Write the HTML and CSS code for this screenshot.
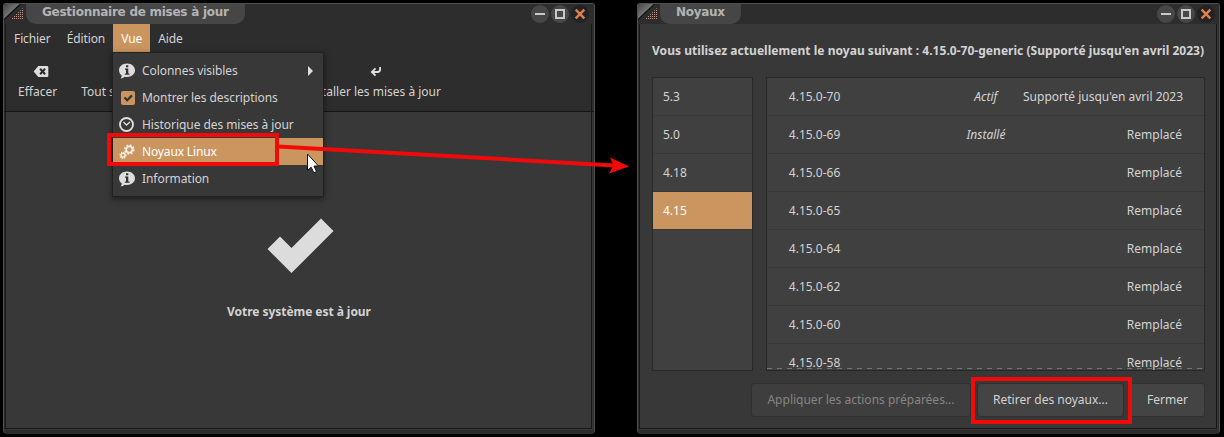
FILE: index.html
```html
<!DOCTYPE html>
<html lang="fr">
<head>
  <meta charset="UTF-8">
  <meta name="viewport" content="width=device-width, initial-scale=1.0">
  <title>Gestionnaire de mises à jour</title>
  <link rel="stylesheet" href="styles.css">
</head>
<body>
  <!-- shared symbols -->
  <svg class="defs" width="0" height="0">
    <defs>
      <pattern id="dots" width="2" height="2" patternUnits="userSpaceOnUse">
        <rect width="1" height="1" fill="#c89080"/>
      </pattern>
      <linearGradient id="shine" x1="0" y1="0" x2="1" y2="1">
        <stop offset="0" stop-color="#444"/>
        <stop offset="0.5" stop-color="#777"/>
      </linearGradient>
      <symbol id="corner" viewBox="0 0 22 20">
        <path d="M0 0h16L0 15z" fill="url(#shine)"/>
        <path d="M16.500 0L0 15.500" stroke="#111" stroke-width="1.200"/>
        <path d="M19 4v12H6z" fill="url(#dots)"/>
      </symbol>
      <symbol id="controls" viewBox="0 0 60 20">
        <circle cx="10" cy="10" r="9" fill="#474747"/>
        <path d="M5 10h10" stroke="#c8c8c8" stroke-width="2"/>
        <circle cx="30" cy="10" r="9" fill="#474747"/>
        <rect x="26" y="6" width="8" height="8" fill="none" stroke="#c8c8c8" stroke-width="2"/>
        <circle cx="50" cy="10" r="9" fill="#232325"/>
        <path d="M45.700 5.700l8.600 8.600M54.300 5.700l-8.600 8.600" stroke="#e08050" stroke-width="2.400"/>
      </symbol>
      <symbol id="info" viewBox="0 0 16 16">
        <path d="M8 .5c4.500 0 8 2.900 8 6.800S12.500 14 8 14c-.9 0-1.700-.1-2.500-.3C4.500 14.700 3.200 15.300 1.500 15.300c.9-.8 1.300-1.700 1.300-2.700C1.100 11.400 0 9.500 0 7.300 0 3.400 3.500.5 8 .5z" fill="#dedede"/>
        <path d="M7 2.300h2.300v2H7zM6 5.500h3.300v5h1.200v1.300H5.800v-1.300H7V6.800H6z" fill="#333"/>
      </symbol>
    </defs>
  </svg>

  <div class="desktop">
    <div class="window updates">
      <div class="titlebar">
        <svg class="corner"><use href="#corner"/></svg>
        <div class="title">Gestionnaire de mises à jour</div>
        <svg class="controls"><use href="#controls"/></svg>
      </div>
      <div class="menubar">
        <span>Fichier</span>
        <span>Édition</span>
        <span class="open">Vue</span>
        <span>Aide</span>
      </div>
      <div class="toolbar">
        <div class="tool clear">
          <svg width="16" height="12" viewBox="0 0 16 12">
            <path d="M5 0h9.500Q16 0 16 1.500v9Q16 12 14.500 12H5L0 6z" fill="#dedede"/>
            <path d="M7 3l5.500 6M12.500 3L7 9" stroke="#2d2d2d" stroke-width="2.200"/>
          </svg>
          <span>Effacer</span>
        </div>
        <div class="tool select"><span>Tout sélectionner</span></div>
        <div class="tool install">
          <svg width="12" height="12" viewBox="0 0 12 12" fill="none" stroke="#dedede" stroke-width="2">
            <path d="M10.500 1v2.500Q10.500 6.500 7.500 6.500H2M5.500 2.500l-4 4 4 4"/>
          </svg>
          <span>Installer les mises à jour</span>
        </div>
      </div>
      <div class="status">
        <svg width="68" height="56" viewBox="0 0 68 56">
          <path d="M0.500 31L13 18.500 24.500 30 54 0.500 66.500 13 24.500 55z" fill="#dcdcdc"/>
        </svg>
        <p>Votre système est à jour</p>
      </div>
    </div>

    <div class="menu">
      <div class="item">
        <svg width="16" height="16"><use href="#info"/></svg>
        <span>Colonnes visibles</span>
        <svg class="arrow" width="5" height="10" viewBox="0 0 5 10"><path d="M0 0l5 5-5 5z" fill="#dedede"/></svg>
      </div>
      <div class="item">
        <svg width="16" height="16" viewBox="0 0 16 16">
          <rect x="2" y="1" width="14" height="14" rx="2" fill="#cb955f"/>
          <path d="M5.500 7.500l2.700 2.700 4.800-4.800" fill="none" stroke="#333" stroke-width="2.200"/>
        </svg>
        <span>Montrer les descriptions</span>
      </div>
      <div class="item">
        <svg width="16" height="16" viewBox="0 0 16 16" fill="none" stroke="#dedede">
          <circle cx="7.500" cy="7.500" r="6.500" stroke-width="1.900"/>
          <path d="M4.500 5l3 3L11 5" stroke-width="1.300"/>
        </svg>
        <span>Historique des mises à jour</span>
      </div>
      <div class="item active">
        <svg width="16" height="16" viewBox="0 0 16 16" fill="none" stroke="#f5efe8">
          <circle cx="10.300" cy="5.500" r="3.100" stroke-width="1.800"/>
          <circle cx="10.300" cy="5.500" r="4.500" stroke-width="1.600" stroke-dasharray="1.770 1.764"/>
          <circle cx="4" cy="11.300" r="2" stroke-width="1.400"/>
          <circle cx="4" cy="11.300" r="3" stroke-width="1.200" stroke-dasharray="1.180 1.176"/>
        </svg>
        <span>Noyaux Linux</span>
      </div>
      <div class="item">
        <svg width="16" height="16"><use href="#info"/></svg>
        <span>Information</span>
      </div>
    </div>

    <div class="window kernels">
      <div class="titlebar">
        <svg class="corner"><use href="#corner"/></svg>
        <div class="title">Noyaux</div>
        <svg class="controls"><use href="#controls"/></svg>
      </div>
      <div class="body">
        <h1>Vous utilisez actuellement le noyau suivant : 4.15.0-70-generic (Supporté jusqu'en avril 2023)</h1>
        <div class="lists">
          <div class="branches">
            <div>5.3</div>
            <div>5.0</div>
            <div>4.18</div>
            <div class="selected">4.15</div>
          </div>
          <div class="versions">
            <div class="row"><span>4.15.0-70</span><i>Actif</i><span>Supporté jusqu'en avril 2023</span></div>
            <div class="row"><span>4.15.0-69</span><i>Installé</i><span>Remplacé</span></div>
            <div class="row"><span>4.15.0-66</span><i></i><span>Remplacé</span></div>
            <div class="row"><span>4.15.0-65</span><i></i><span>Remplacé</span></div>
            <div class="row"><span>4.15.0-64</span><i></i><span>Remplacé</span></div>
            <div class="row"><span>4.15.0-62</span><i></i><span>Remplacé</span></div>
            <div class="row"><span>4.15.0-60</span><i></i><span>Remplacé</span></div>
            <div class="row"><span>4.15.0-58</span><i></i><span>Remplacé</span></div>
          </div>
        </div>
        <div class="buttons">
          <button class="apply" disabled>Appliquer les actions préparées...</button>
          <button class="remove">Retirer des noyaux...</button>
          <button class="close">Fermer</button>
        </div>
      </div>
    </div>

    <!-- annotations -->
    <div class="mark mark-menu"></div>
    <div class="mark mark-button"></div>
    <svg class="overlay" width="1224" height="437">
      <path d="M278 146.500L614 165.500" stroke="#f00a0a" stroke-width="4"/>
      <path d="M629 166.500L610 157.500 613.500 165.500 609 173.500z" fill="#f00a0a"/>
      <path d="M307.500 154v16.500l3.700-3.300 2.600 5.600 2.700-1.200-2.500-5.600h4.500z" fill="#fff" stroke="#111"/>
    </svg>
  </div>
</body>
</html>
```

FILE: styles.css
```css
* {
  box-sizing: border-box;
}

body {
  margin: 0;
  background: #000;
  color: #d3d3d3;
  font-family: "Noto Sans", sans-serif;
  font-size: 12px;
}

.defs {
  position: absolute;
}

.desktop {
  position: relative;
  width: 1224px;
  height: 437px;
  overflow: hidden;
}

.window {
  position: absolute;
  top: 3px;
  height: 431px;
  display: flex;
  flex-direction: column;
  background: #383838;
  border: 1px solid #505050;
  border-bottom-color: #2a2a2a;
  border-radius: 3px 3px 4px 4px;
  box-shadow: inset 0 0 0 1px #2c2c2c, inset 0 -3px 0 #2c2c2c;
}

.window::after {
  content: "";
  position: absolute;
  inset: 20px 2px 4px 1px;
  border: 1px solid #181818;
  border-top: none;
  pointer-events: none;
}

.updates {
  left: 3px;
  width: 592px;
}

.kernels {
  left: 637px;
  width: 583px;
}

.titlebar {
  display: flex;
  flex: none;
  height: 20px;
  background: #2d2d2d;
}

.corner {
  width: 22px;
  height: 20px;
}

.title {
  height: 20px;
  padding: 0 16px;
  background: #464646;
  color: #b4b4b4;
  border-radius: 0 0 10px 10px;
  font: bold 12px/16px "DejaVu Sans", sans-serif;
  letter-spacing: -0.26px;
}

.kernels .title {
  letter-spacing: -0.3px;
}

.controls {
  width: 60px;
  height: 20px;
  margin-left: auto;
  margin-right: 3px;
}

.updates .controls {
  margin-right: 4px;
}

.menubar {
  display: flex;
  flex: none;
  height: 28px;
  padding-left: 2px;
  line-height: 29px;
  letter-spacing: -0.1px;
  background: #2d2d2d;
}

.menubar span {
  padding: 0 8px;
}

.menubar .open {
  background: #cb955f;
  color: #fff;
}

.toolbar {
  display: flex;
  flex: none;
  height: 60px;
  padding: 14px 0 0 14px;
  background: #2d2d2d;
  border-bottom: 1px solid #151515;
}

.tool {
  display: flex;
  flex-direction: column;
  align-items: center;
  justify-content: flex-end;
  height: 35px;
  line-height: 18px;
  white-space: nowrap;
}

.tool svg {
  margin: 0 0 6px 6px;
}

.select {
  margin-left: 24px;
}

.install {
  margin-left: auto;
  margin-right: 153px;
}

.status {
  display: flex;
  flex-direction: column;
  align-items: center;
  padding-top: 106px;
}

.status svg {
  margin-left: 4px;
}

.status p {
  margin: 29px 0 0;
  font-weight: bold;
  line-height: 18px;
  letter-spacing: -0.05px;
}

.menu {
  position: absolute;
  left: 112px;
  top: 52px;
  width: 212px;
  height: 145px;
  padding: 4px 0;
  background: #383838;
  border: 1px solid #202020;
  box-shadow: 0 2px 6px rgba(0, 0, 0, 0.5);
  letter-spacing: -0.06px;
}

.item {
  display: flex;
  align-items: center;
  height: 27px;
  padding: 0 10px 0 6px;
  gap: 7px;
}

.item.active {
  background: #cb955f;
  color: #fff;
  letter-spacing: -0.15px;
}

.arrow {
  margin-left: auto;
}

.body {
  flex: 1;
  display: flex;
  flex-direction: column;
  padding: 18px 14px 17px;
}

h1 {
  margin: 0 0 17px;
  font-size: 12px;
  line-height: 18px;
  letter-spacing: 0.035px;
  white-space: nowrap;
}

.lists {
  display: flex;
  gap: 13px;
  height: 294px;
}

.branches,
.versions {
  background: #404040;
  border: 1px solid #282828;
  overflow: hidden;
}

.branches {
  width: 101px;
}

.versions {
  position: relative;
  width: 440px;
}

.branches div,
.row {
  height: 38px;
  line-height: 37px;
  border-bottom: 1px solid #383838;
}

.branches div {
  padding-left: 10px;
}

.branches .selected {
  background: #cb955f;
  color: #fff;
}

.row {
  display: flex;
  justify-content: space-between;
  padding: 0 22px;
  white-space: nowrap;
}

.row i {
  width: 84px;
  margin-left: 3px;
  text-align: center;
}

.row span {
  width: 152px;
}

.row span:last-child {
  width: 159px;
  margin-left: -5px;
  text-align: right;
}

/* more rows below */
.versions::after {
  content: "";
  position: absolute;
  left: 0;
  right: 0;
  bottom: 1px;
  height: 1px;
  background: repeating-linear-gradient(90deg, #757575 0 5px, transparent 5px 10px);
}

.buttons {
  display: flex;
  justify-content: flex-end;
  gap: 6px;
  margin-top: 12px;
}

button {
  height: 34px;
  padding: 0 0 2px;
  background: #444;
  border: 1px solid #303030;
  border-radius: 3px;
  color: #d3d3d3;
  font: inherit;
}

button:disabled {
  background: #3e3e3e;
  color: #858585;
}

.apply {
  width: 220px;
}

.remove {
  width: 147px;
}

.close {
  width: 75px;
}

.mark {
  position: absolute;
  border: 4px solid #f00a0a;
}

.mark-menu {
  left: 107px;
  top: 133px;
  width: 172px;
  height: 33px;
}

.mark-button {
  left: 971px;
  top: 377px;
  width: 161px;
  height: 47px;
}

.overlay {
  position: absolute;
  left: 0;
  top: 0;
}
```
